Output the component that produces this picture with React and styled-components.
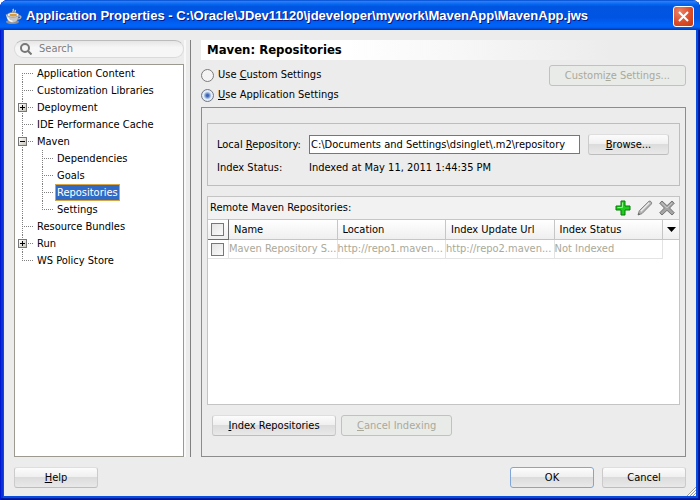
import React, { useState } from 'react';
import styled, { createGlobalStyle, css } from 'styled-components';

const Global = createGlobalStyle`
  * { box-sizing: border-box; }
  html, body { margin: 0; background: #fff; }
  body, button, input, table {
    font-family: "DejaVu Sans Condensed", "Noto Sans", sans-serif;
    font-size: 11px;
    line-height: 16px;
    color: #000;
  }
`;

const Window = styled.div`
  position: relative;
  display: flex;
  flex-direction: column;
  min-height: 100vh;
  padding: 0 4px 4px;
  border-radius: 8px 8px 0 0;
  background: #0a4be0;
  box-shadow: inset 1px 0 #0019cf, inset -1px -1px #00138c, inset -2px -2px #001ea0, inset 3px 0 #0831d9;
`;

const TitleBar = styled.header`
  display: flex;
  align-items: center;
  height: 30px;
  margin: 0 -4px;
  padding: 2px 6px 0 5px;
  gap: 4px;
  border-radius: 8px 8px 0 0;
  background: linear-gradient(#0048c8 0%, #2a7cf8 5%, #0468f0 14%, #0055e0 22%, #0054e3 60%, #0063f8 82%, #0062f5 90%, #0042c8 97%, #0038b8 100%);
`;

const Title = styled.h1`
  flex: 1;
  margin: 0;
  font: bold 13px/20px "Liberation Sans", Arial, sans-serif;
  color: #fff;
  text-shadow: 1px 1px #0a1883;
  white-space: nowrap;
  overflow: hidden;
`;

const CloseButton = styled.button`
  display: grid;
  place-items: center;
  width: 21px;
  height: 21px;
  padding: 0;
  border: 1px solid #fff;
  border-radius: 3px;
  background: radial-gradient(circle at 30% 25%, #ea8466, #dc4d2a 55%, #c23a12);
`;

const Body = styled.div`
  display: flex;
  flex: 1;
  flex-direction: column;
  padding: 10px 10px 8px;
  gap: 10px;
  background: #ececec;
`;

const Columns = styled.div`
  display: flex;
  flex: 1;
`;

const Sidebar = styled.nav`
  display: flex;
  flex-direction: column;
  width: 172px;
  gap: 6px;
  border-right: 2px solid #f8f8f8;
`;

const SearchBox = styled.label`
  display: flex;
  align-items: center;
  height: 18px;
  padding: 0 5px;
  gap: 7px;
  border: 1px solid #dadada;
  border-top-color: #bcbcbc;
  border-radius: 9px;
  background: linear-gradient(#e6e6e6, #f6f6f6 40%);
`;

const SearchInput = styled.input`
  flex: 1;
  min-width: 0;
  padding: 0;
  border: 0;
  outline: 0;
  background: none;
  &::placeholder { color: #7d7d7d; opacity: 1; }
`;

const Tree = styled.ul`
  flex: 1;
  margin: 0;
  padding: 0;
  border: 1px solid #9c9a90;
  background: #fff;
  list-style: none;
`;

const TreeRow = styled.li`
  display: flex;
  height: 17px;
`;

const dots = (dir) => `repeating-linear-gradient(${dir}, #808080 0 1px, transparent 1px 2px)`;

const Guide = styled.span`
  width: 20px;
  background: ${dots('to bottom')} 7px 0 / 1px 100% no-repeat;
`;

const Connector = styled.span`
  display: flex;
  align-items: center;
  width: 20px;
  padding-left: 3px;
  background:
    ${dots('to bottom')} 7px ${(p) => (p.$edge === 'first' ? '8px' : '0')} / 1px ${(p) => (p.$edge === 'last' ? '9px' : '17px')} no-repeat,
    ${dots('to right')} 7px 8px / 12px 1px no-repeat;
`;

const Toggle = styled.button`
  display: grid;
  place-items: center;
  width: 9px;
  height: 9px;
  padding: 0;
  border: 1px solid #777;
  background: linear-gradient(135deg, #fff, #c8c5b8);
`;

const TreeLabel = styled.span`
  padding: 0 2px;
  line-height: 17px;
  white-space: nowrap;
  ${(p) => p.$selected && css`
    padding: 0 1px;
    border: 1px solid #d9a441;
    line-height: 15px;
    background: #316ac5;
    color: #fff;
  `}
`;

const Main = styled.main`
  display: flex;
  flex: 1;
  min-width: 0;
  flex-direction: column;
  margin-left: 4px;
  padding-left: 10px;
  border-left: 1px solid #808080;
`;

const Heading = styled.h2`
  margin: 0 0 5px;
  padding: 0 6px;
  font: bold 13px/20px "DejaVu Sans Condensed", "Noto Sans", sans-serif;
  background: linear-gradient(to right, #fff 30%, #ececec 85%);
`;

const Choice = styled.label`
  display: flex;
  align-items: center;
  flex: 1;
  height: 20px;
  gap: 4px;
`;

const ChoiceRow = styled.div`
  display: flex;
  height: 20px;
`;

const Radio = styled.input`
  appearance: none;
  width: 13px;
  height: 13px;
  margin: 0;
  border: 1px solid #7b7b7b;
  border-radius: 50%;
  background: #f4f4f4;
  &:checked {
    border-color: #6f7786;
    background: radial-gradient(circle, #3b66b4 0 1px, #6f90cc 2px, #e4ecf8 4px);
  }
`;

const Button = styled.button`
  min-width: ${(p) => p.$width};
  height: 21px;
  padding: 0 15px;
  border: 1px solid;
  border-color: #dedede #cbcbcb #bdbdbd;
  border-radius: 3px;
  background: linear-gradient(#fcfcfc, #f0f0f0 45%, #dcdcdc 50%, #e9e9e9);
  line-height: 19px;
  white-space: nowrap;
  ${(p) => p.$primary && css`border-color: #7fa6d6;`}
  &:disabled {
    border-color: #bfc2bf;
    background: #e9ebe9;
    color: #a9a99a;
  }
`;

const Panel = styled.section`
  display: flex;
  flex: 1;
  flex-direction: column;
  margin-top: 2px;
  padding: 15px 5px 20px;
  border: 1px solid #8c8c8c;
`;

const Group = styled.div`
  display: grid;
  grid-template-columns: 92px 1fr auto;
  align-items: center;
  margin-bottom: 10px;
  padding: 10px 10px 9px 9px;
  row-gap: 5px;
  border: 1px solid #bdbdbd;
`;

const PathInput = styled.input`
  height: 19px;
  min-width: 0;
  margin-right: 8px;
  padding: 0 1px;
  border: 1px solid #777;
  background: #fff;
`;

const Repositories = styled.div`
  display: flex;
  flex: 1;
  flex-direction: column;
  border: 1px solid #c4c4c4;
  background: #fff;
`;

const ListHeader = styled.div`
  display: flex;
  align-items: center;
  height: 22px;
  padding: 0 4px 0 2px;
  gap: 6px;
  background: #f2f2f2;
`;

const ListTitle = styled.span`
  flex: 1;
`;

const IconButton = styled.button`
  display: grid;
  width: 16px;
  height: 16px;
  padding: 0;
  border: 0;
  background: none;
`;

const Table = styled.table`
  width: 100%;
  table-layout: fixed;
  border-collapse: separate;
  border-spacing: 0;
`;

const HeadCell = styled.th`
  width: ${(p) => p.$width};
  height: 21px;
  padding: 0 0 0 ${(p) => p.$inset || '5px'};
  border: 1px solid #c6c6c6;
  border-width: 1px 1px 1px 0;
  background: linear-gradient(#fff, #efefef);
  font-weight: normal;
  text-align: left;
  line-height: 0;
  &:last-child { border-right: 0; }
  ${(p) => p.$corner && css`border-right-color: #6e6e6e; border-bottom-color: #6e6e6e;`}
`;

const Cell = styled.td`
  height: 19px;
  padding: 0 0 0 ${(p) => p.$inset || '0'};
  border: 1px solid #e3e3e3;
  border-width: 0 1px 1px 0;
  color: #a9a99a;
  white-space: nowrap;
`;

const EmptyCell = styled.td`
  padding: 0;
`;

const Check = styled.input`
  appearance: none;
  display: block;
  width: 13px;
  height: 13px;
  margin: 0;
  border: 1px solid #777;
  background: linear-gradient(135deg, #e4e4e4, #fafafa);
`;

const MenuButton = styled.button`
  display: grid;
  place-items: center;
  width: 100%;
  height: 19px;
  padding: 0;
  border: 0;
  background: none;
`;

const Actions = styled.div`
  display: flex;
  margin-top: 10px;
  padding-left: 5px;
  gap: 5px;
`;

const Footer = styled.footer`
  display: flex;
  gap: 8px;
`;

const Spacer = styled.span`
  flex: 1;
`;

const Grip = styled.svg`
  position: absolute;
  right: 4px;
  bottom: 4px;
`;

const CupIcon = () => (
  <svg width="17" height="17" viewBox="0 0 17 17" aria-hidden="true">
    <path d="M8 5.500C6.500 4 9.500 3 8 .8M10 5.500c-.8-1.500.8-2 .2-3.500" fill="none" stroke="#f0d58c" strokeWidth="1.300" />
    <ellipse cx="7.500" cy="13.800" rx="6.500" ry="2.300" fill="#8d8f92" />
    <path d="M3 7L.8 6.200c1 4.500 2.500 7.800 6.700 8.300 4.500-.3 6-4 6.300-8z" fill="#c6c7c8" />
    <path d="M13.500 8.200c3.500-1 3.300 2.300-1.300 3" fill="none" stroke="#b5b6b8" strokeWidth="1.300" />
    <path d="M2.500 9.500c1.200 2.700 3 3.700 5 3.900" fill="none" stroke="#fff" strokeWidth="1.200" />
    <ellipse cx="8" cy="6.800" rx="5.800" ry="2.300" fill="#f8f7f2" stroke="#85868a" strokeWidth=".7" />
    <ellipse cx="8.200" cy="7.100" rx="3.900" ry="1.300" fill="#d99a3c" />
  </svg>
);

const AddIcon = () => (
  <svg width="16" height="16" viewBox="0 0 16 16">
    <path d="M6 1h4v5h5v4h-5v5H6v-5H1V6h5z" fill="#1fcb1f" stroke="#087a08" strokeLinejoin="round" />
    <path d="M7.500 2.500v5h-5" fill="none" stroke="#8df58a" />
  </svg>
);

const EditIcon = () => (
  <svg width="16" height="16" viewBox="0 0 16 16">
    <path d="M1 15l1.300-4.300L12 1.200c1.300-.7 3.300 1.200 2.500 2.700L5 13.600z" fill="#b4b4b4" stroke="#858585" strokeLinejoin="round" />
    <path d="M3.800 11.200l8.500-8.400" stroke="#eee" strokeWidth="1.300" />
    <path d="M1 15l.8-2 1.300 1.200z" fill="#555" />
  </svg>
);

const DeleteIcon = () => (
  <svg width="16" height="16" viewBox="0 0 16 16">
    <path d="M3 1l5 4.700L13 1l2.300 2.200L10.600 8l4.700 4.800L13 15l-5-4.700L3 15 .7 12.800 5.400 8 .7 3.200z" fill="#a4a4a4" stroke="#757575" strokeLinejoin="round" />
    <path d="M2.500 3L8 8l5-4.800" fill="none" stroke="#c8c8c8" />
  </svg>
);

const TREE = [
  { label: 'Application Content', edge: 'first' },
  { label: 'Customization Libraries' },
  { label: 'Deployment', toggle: '+' },
  { label: 'IDE Performance Cache' },
  { label: 'Maven', toggle: '-' },
  { label: 'Dependencies', child: true },
  { label: 'Goals', child: true },
  { label: 'Repositories', child: true },
  { label: 'Settings', child: true, edge: 'last' },
  { label: 'Resource Bundles' },
  { label: 'Run', toggle: '+' },
  { label: 'WS Policy Store', edge: 'last' },
];

const HEADINGS = ['Name', 'Location', 'Index Update Url', 'Index Status'];
const REPOSITORY = ['Maven Repository S...', 'http://repo1.maven...', 'http://repo2.maven...', 'Not Indexed'];

export default function App() {
  const [selected, setSelected] = useState('Repositories');
  return (
    <>
      <Global />
      <Window>
        <TitleBar>
          <CupIcon />
          <Title>Application Properties - C:\Oracle\JDev11120\jdeveloper\mywork\MavenApp\MavenApp.jws</Title>
          <CloseButton aria-label="Close">
            <svg width="13" height="13" viewBox="0 0 13 13"><path d="M2 2l9 9M11 2l-9 9" stroke="#fff" strokeWidth="2" /></svg>
          </CloseButton>
        </TitleBar>
        <Body>
          <Columns>
            <Sidebar>
              <SearchBox>
                <svg width="12" height="12" viewBox="0 0 12 12" fill="none" stroke="#777" strokeWidth="2"><circle cx="5" cy="5" r="4" /><path d="M8 8l3.500 3.500" /></svg>
                <SearchInput placeholder="Search" aria-label="Search" />
              </SearchBox>
              <Tree>
                {TREE.map((n) => (
                  <TreeRow key={n.label} onClick={() => setSelected(n.label)}>
                    {n.child && <Guide />}
                    <Connector $edge={n.edge}>
                      {n.toggle && (
                        <Toggle aria-label={n.label}>
                          <svg width="5" height="5" viewBox="0 0 5 5" stroke="#000"><path d={n.toggle === '+' ? 'M0 2.500h5M2.500 0v5' : 'M0 2.500h5'} /></svg>
                        </Toggle>
                      )}
                    </Connector>
                    <TreeLabel $selected={n.label === selected}>{n.label}</TreeLabel>
                  </TreeRow>
                ))}
              </Tree>
            </Sidebar>
            <Main>
              <Heading>Maven: Repositories</Heading>
              <ChoiceRow>
                <Choice><Radio type="radio" name="scope" /><span>Use <u>C</u>ustom Settings</span></Choice>
                <Button disabled $width="137px">Customi<u>z</u>e Settings...</Button>
              </ChoiceRow>
              <ChoiceRow>
                <Choice><Radio type="radio" name="scope" defaultChecked /><span><u>U</u>se Application Settings</span></Choice>
              </ChoiceRow>
              <Panel>
                <Group>
                  <label htmlFor="path">Local <u>R</u>epository:</label>
                  <PathInput id="path" defaultValue="C:\Documents and Settings\dsinglet\.m2\repository" />
                  <Button $width="81px"><u>B</u>rowse...</Button>
                  <span>Index Status:</span>
                  <span>Indexed at May 11, 2011 1:44:35 PM</span>
                </Group>
                <Repositories>
                  <ListHeader>
                    <ListTitle>Remote Maven Repositories:</ListTitle>
                    <IconButton aria-label="Add"><AddIcon /></IconButton>
                    <IconButton aria-label="Edit"><EditIcon /></IconButton>
                    <IconButton aria-label="Delete"><DeleteIcon /></IconButton>
                  </ListHeader>
                  <Table>
                    <thead>
                      <tr>
                        <HeadCell $inset="3px" $corner $width="21px"><Check type="checkbox" aria-label="Select all" /></HeadCell>
                        {HEADINGS.map((h) => <HeadCell key={h}>{h}</HeadCell>)}
                        <HeadCell $inset="0" $width="16px">
                          <MenuButton aria-label="Columns">
                            <svg width="9" height="5" viewBox="0 0 9 5"><path d="M0 0h9L4.500 5z" /></svg>
                          </MenuButton>
                        </HeadCell>
                      </tr>
                    </thead>
                    <tbody>
                      <tr>
                        <Cell $inset="3px"><Check type="checkbox" aria-label="Select Maven Repository" /></Cell>
                        {REPOSITORY.map((t) => <Cell key={t}>{t}</Cell>)}
                        <EmptyCell />
                      </tr>
                    </tbody>
                  </Table>
                </Repositories>
                <Actions>
                  <Button $width="124px"><u>I</u>ndex Repositories</Button>
                  <Button disabled $width="111px"><u>C</u>ancel Indexing</Button>
                </Actions>
              </Panel>
            </Main>
          </Columns>
          <Footer>
            <Button $width="84px"><u>H</u>elp</Button>
            <Spacer />
            <Button $primary $width="84px">OK</Button>
            <Button $width="84px">Cancel</Button>
          </Footer>
        </Body>
        <Grip width="9" height="9" viewBox="0 0 9 9" aria-hidden="true">
          <path d="M0 9L9 0M3 9l6-6M6 9l3-3" stroke="#a19d8e" />
          <path d="M1 9l8-8M4 9l5-5M7 9l2-2" stroke="#fff" />
        </Grip>
      </Window>
    </>
  );
}
